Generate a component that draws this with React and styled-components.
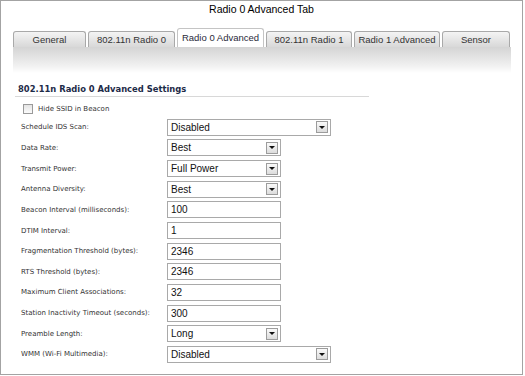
import React from 'react'
import styled, { createGlobalStyle } from 'styled-components'

const GlobalStyle = createGlobalStyle`
  body {
    margin: 0;
    background: #ffffff;
  }
`

const Frame = styled.div`
  box-sizing: border-box;
  width: 523px;
  height: 375px;
  border: 1px solid #a3a3a3;
  background: #ffffff;
  overflow: hidden;
`

const Title = styled.div`
  font-family: 'Liberation Sans', Arial, sans-serif;
  font-size: 10.5px;
  line-height: 16px;
  color: #000;
  text-align: center;
`

const TabStrip = styled.div`
  display: flex;
  align-items: flex-end;
  gap: 2px;
  height: 30px;
  padding-left: 12px;
`

const Tab = styled.div`
  box-sizing: border-box;
  width: ${p => p.$w}px;
  height: ${p => (p.$active ? 19 : 16)}px;
  border: 1px solid ${p => (p.$active ? '#c4c4c4' : '#a9a9a9')};
  border-bottom: none;
  border-radius: 3px 3px 0 0;
  background: ${p => (p.$active ? '#ffffff' : 'linear-gradient(#f4f4f4, #d8d8d8)')};
  font-family: 'Liberation Sans', Arial, sans-serif;
  font-size: 9.5px;
  line-height: ${p => (p.$active ? 17 : 15)}px;
  color: ${p => (p.$active ? '#2a2a3a' : '#333')};
  text-align: center;
  white-space: nowrap;
`

const Band = styled.div`
  margin-left: 12px;
  width: 498px;
  height: 26px;
  background: linear-gradient(#d4d4d4, #f2f2f2 75%, #ffffff);
`

const Section = styled.div`
  padding: 11px 0 0 14px;
`

const Heading = styled.div`
  width: 351px;
  padding: 0 0 2px 3px;
  border-bottom: 1px solid #d8d8d8;
  font-family: 'DejaVu Sans', Verdana, sans-serif;
  font-weight: bold;
  font-size: 8.4px;
  line-height: 10px;
  color: #1d2b48;
`

const CheckRow = styled.label`
  display: flex;
  align-items: center;
  gap: 5px;
  height: 14px;
  margin: 5px 0 1px 8px;
`

const Box = styled.span`
  box-sizing: border-box;
  width: 10px;
  height: 10px;
  border: 1px solid #9a9a9a;
  background: linear-gradient(#e4e4e4, #fbfbfb);
`

const Label = styled.span`
  font-family: 'DejaVu Sans', Verdana, sans-serif;
  font-size: 7px;
  color: #333;
  white-space: nowrap;
`

const Form = styled.div`
  display: grid;
  grid-template-columns: 146px 1fr;
  grid-auto-rows: 20.65px;
  align-items: center;
  padding-left: 6px;
`

const Field = styled.div`
  box-sizing: border-box;
  width: ${p => p.$w}px;
  height: 17px;
  border: 1px solid #a9a9a9;
  display: flex;
  align-items: center;
  padding-left: 3px;
  font-family: 'Liberation Sans', Arial, sans-serif;
  font-size: 10px;
  color: #111;
  background: #fff;
`

const Value = styled.span`
  flex: 1;
`

const Arrow = styled.span`
  box-sizing: border-box;
  width: 12px;
  height: 12px;
  margin-right: 2px;
  border: 1px solid #9c9c9c;
  background: linear-gradient(#fafafa, #dcdcdc);
  display: flex;
  align-items: center;
  justify-content: center;
  &::after {
    content: '';
    border-left: 3px solid transparent;
    border-right: 3px solid transparent;
    border-top: 3px solid #111;
  }
`

const tabs = [
  { name: 'General', w: 73 },
  { name: '802.11n Radio 0', w: 87 },
  { name: 'Radio 0 Advanced', w: 87, active: true },
  { name: '802.11n Radio 1', w: 86 },
  { name: 'Radio 1 Advanced', w: 86 },
  { name: 'Sensor', w: 68 },
]

const rows = [
  { label: 'Schedule IDS Scan:', value: 'Disabled', select: true, wide: true },
  { label: 'Data Rate:', value: 'Best', select: true },
  { label: 'Transmit Power:', value: 'Full Power', select: true },
  { label: 'Antenna Diversity:', value: 'Best', select: true },
  { label: 'Beacon Interval (milliseconds):', value: '100' },
  { label: 'DTIM Interval:', value: '1' },
  { label: 'Fragmentation Threshold (bytes):', value: '2346' },
  { label: 'RTS Threshold (bytes):', value: '2346' },
  { label: 'Maximum Client Associations:', value: '32' },
  { label: 'Station Inactivity Timeout (seconds):', value: '300' },
  { label: 'Preamble Length:', value: 'Long', select: true },
  { label: 'WMM (Wi-Fi Multimedia):', value: 'Disabled', select: true, wide: true },
]

const App = () => {
  return (
    <>
      <GlobalStyle />
      <Frame>
        <Title>Radio 0 Advanced Tab</Title>
        <TabStrip>
          {tabs.map(t => (
            <Tab key={t.name} $w={t.w} $active={t.active}>{t.name}</Tab>
          ))}
        </TabStrip>
        <Band />
        <Section>
          <Heading>802.11n Radio 0 Advanced Settings</Heading>
          <CheckRow>
            <Box />
            <Label>Hide SSID in Beacon</Label>
          </CheckRow>
          <Form>
            {rows.map(r => (
              <React.Fragment key={r.label}>
                <Label>{r.label}</Label>
                <Field $w={r.wide ? 164 : 114}>
                  <Value>{r.value}</Value>
                  {r.select && <Arrow />}
                </Field>
              </React.Fragment>
            ))}
          </Form>
        </Section>
      </Frame>
    </>
  )
}

export default App
